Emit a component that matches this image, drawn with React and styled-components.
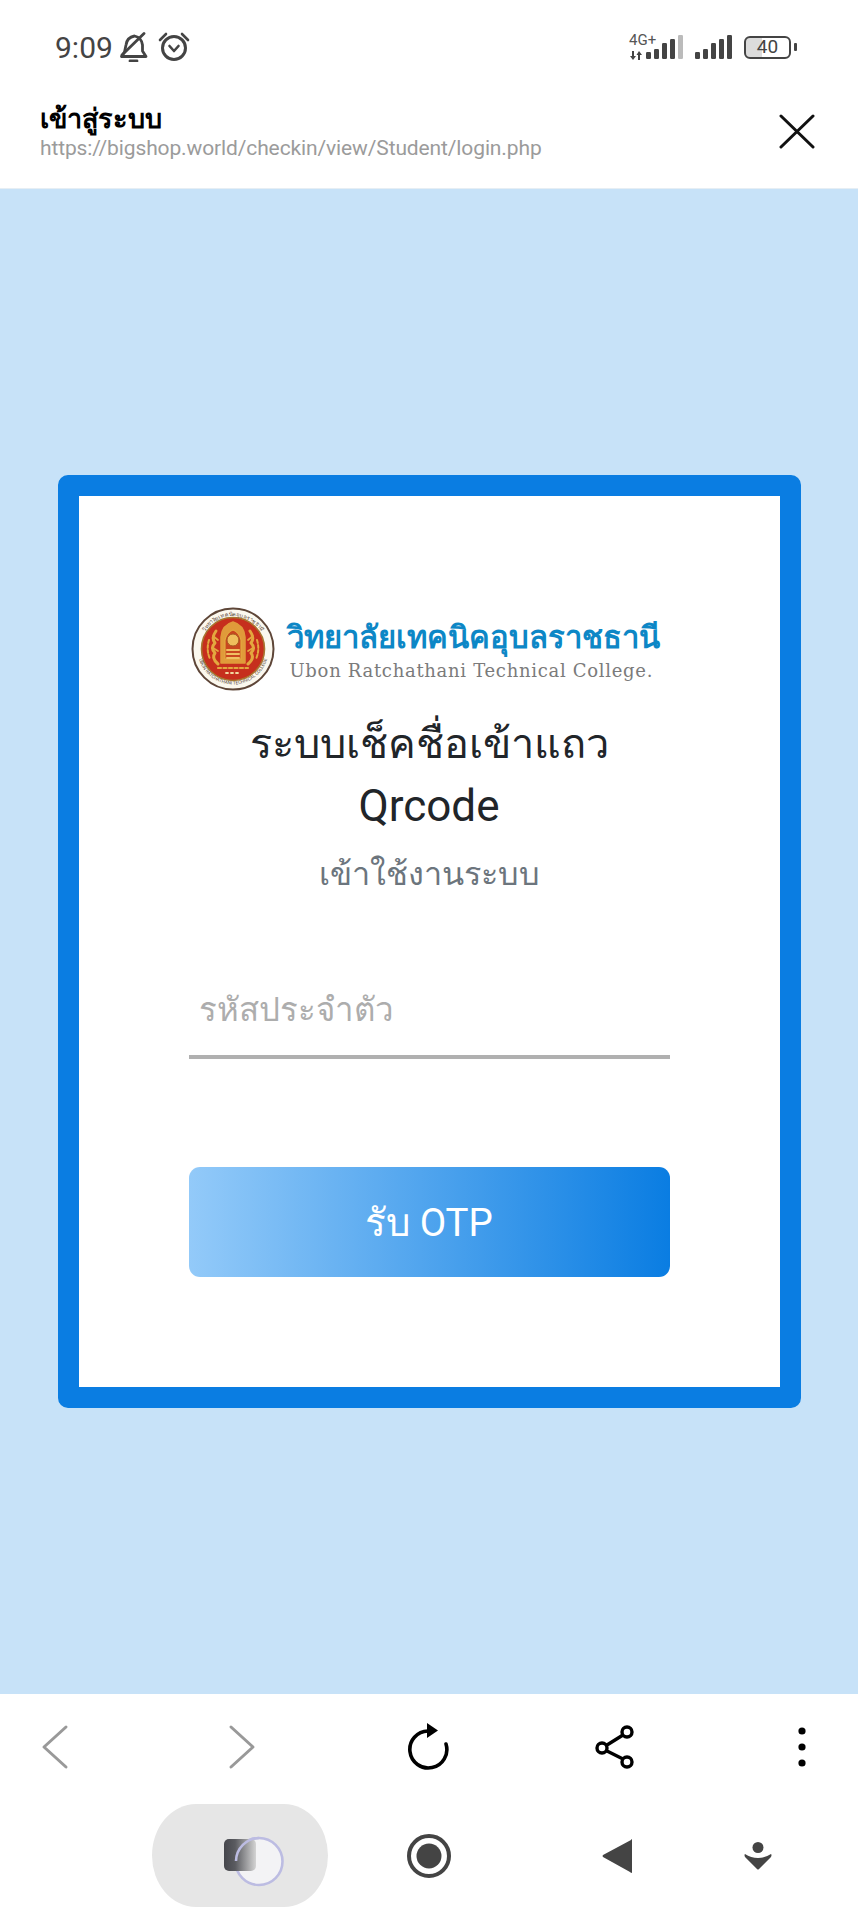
import React from "react";
import styled, { createGlobalStyle } from "styled-components";

const Global = createGlobalStyle`
  html, body { margin: 0; padding: 0; background: #fff; }
  body { font-family: Roboto, "Noto Sans", "Liberation Sans", sans-serif; }
  * { box-sizing: border-box; }
`;

const Page = styled.div`
  width: 858px;
  height: 1907px;
  display: flex;
  flex-direction: column;
  overflow: hidden;
  background: #fff;
`;

const StatusBar = styled.div`
  height: 94px;
  flex: none;
  padding: 0 61px 0 55px;
  display: flex;
  align-items: center;
  justify-content: space-between;
  color: #444;
`;

const StatusGroup = styled.div`
  display: flex;
  align-items: center;
  gap: ${(p) => p.$gap ?? 8}px;
`;

const Time = styled.span`
  font-size: 30px;
  font-weight: 400;
  width: 57px;
  white-space: nowrap;
`;

const NetColumn = styled.div`
  width: 17px;
  height: 25px;
  display: flex;
  flex-direction: column;
  justify-content: space-between;
`;

const NetLabel = styled.span`
  font-size: 15px;
  line-height: 10px;
  color: #555;
  white-space: nowrap;
`;

const Battery = styled.div`
  width: 47px;
  height: 23px;
  border: 2.5px solid #444;
  border-radius: 6px;
  background: linear-gradient(90deg, #dcdcdc 38%, transparent 38%);
  font-size: 19px;
  line-height: 18px;
  text-align: center;
  color: #444;
`;

const BatteryNub = styled.div`
  width: 3px;
  height: 8px;
  margin-left: 3px;
  background: #444;
  border-radius: 1px;
`;

const TitleBar = styled.header`
  height: 95px;
  flex: none;
  padding: 0 43px 0 40px;
  display: flex;
  align-items: flex-start;
  justify-content: space-between;
  border-bottom: 1px solid #e6eef4;
`;

const TitleBlock = styled.div`
  display: flex;
  flex-direction: column;
  padding-top: 10px;
`;

const PageTitle = styled.div`
  font-size: 27px;
  line-height: 30px;
  font-weight: 700;
  color: #000;
`;

const PageUrl = styled.div`
  font-size: 21px;
  line-height: 24px;
  letter-spacing: -0.12px;
  color: #9b9b9b;
  margin-top: 2px;
`;

const CloseIcon = styled.svg`
  width: 36px;
  height: 36px;
  margin-top: 20px;
`;

const Main = styled.main`
  flex: 1;
  background: #c7e2f8;
  display: flex;
  align-items: center;
  justify-content: center;
`;

const Card = styled.section`
  width: 743px;
  height: 933px;
  border: 21px solid #0a7de2;
  border-radius: 10px;
  background: #fff;
  padding-top: 111px;
  display: flex;
  flex-direction: column;
  align-items: center;
`;

const Logo = styled.div`
  display: flex;
  align-items: center;
  gap: 12px;
  width: 481px;
  padding-left: 2px;
`;

const LogoText = styled.div`
  display: flex;
  flex-direction: column;
`;

const LogoThai = styled.div`
  font-size: 31px;
  line-height: 44px;
  font-weight: 700;
  color: #0d87c6;
  white-space: nowrap;
`;

const LogoEnglish = styled.div`
  font-family: "DejaVu Serif", serif;
  font-size: 18px;
  line-height: 22px;
  letter-spacing: 0.7px;
  color: #7b7b7b;
  white-space: nowrap;
  padding-left: 3px;
`;

const Heading = styled.h1`
  margin: 21px 0 0;
  font-size: 41.5px;
  line-height: 63px;
  font-weight: 400;
  color: #212529;
  text-align: center;
`;

const HeadingLatin = styled.span`
  font-size: 44px;
`;

const SubHeading = styled.p`
  margin: 11px 0 0;
  font-size: 32.4px;
  line-height: 50px;
  color: #6c757d;
  text-align: center;
`;

const Field = styled.input`
  display: block;
  width: 481px;
  height: 96px;
  margin-top: 64px;
  padding: 0 10px;
  border: 0;
  border-bottom: 4px solid #b0b0b0;
  outline: 0;
  background: transparent;
  font: inherit;
  font-size: 33px;
  color: #333;
  &::placeholder { color: #adadad; opacity: 1; }
`;

const SubmitButton = styled.button`
  width: 481px;
  height: 110px;
  margin-top: 108px;
  border: 0;
  border-radius: 11px;
  background: linear-gradient(90deg, #93caf9 0%, #0a7de2 100%);
  color: #fff;
  font: inherit;
  font-size: 38.5px;
`;

const Bottom = styled.footer`
  height: 213px;
  flex: none;
  background: #fff;
  display: flex;
  flex-direction: column;
`;

const Toolbar = styled.div`
  height: 110px;
  flex: none;
  padding: 29px 31px 0;
  display: flex;
  justify-content: space-between;
  align-items: flex-start;
`;

const ToolIcon = styled.svg`
  width: 48px;
  height: 48px;
`;

const NavBar = styled.div`
  flex: 1;
  padding-left: 152px;
  display: grid;
  grid-template-columns: 176px 202px 174px 108px;
  align-items: center;
  justify-items: center;
`;

const RecentsPill = styled.div`
  width: 176px;
  height: 103px;
  background: #e6e6e6;
  border-radius: 44px / 51.5px;
  display: flex;
  align-items: center;
  justify-content: center;
`;

const Seal = ({ size = 84 }) => (
  <svg width={size} height={size} viewBox="0 0 84 84" style={{ flex: "none" }}>
    <defs>
      <path id="sealTop" d="M9 42 A33 33 0 0 1 75 42" />
      <path id="sealBottom" d="M6.5 42 A35.5 35.5 0 0 0 77.5 42" />
    </defs>
    <circle cx="42" cy="42" r="40.5" fill="#fbf8ee" stroke="#5e4638" strokeWidth="2" />
    <circle cx="42" cy="42" r="31.5" fill="#c62f1d" stroke="#a7762f" strokeWidth="1.6" />
    <text fontSize="5.6" fill="#5b4a40" fontFamily="Roboto, sans-serif">
      <textPath href="#sealTop" startOffset="50%" textAnchor="middle">วิทยาลัยเทคนิคอุบลราชธานี</textPath>
    </text>
    <text fontSize="4.6" fill="#4d3d35" fontFamily="Roboto, sans-serif">
      <textPath href="#sealBottom" startOffset="50%" textAnchor="middle">UBON RATCHATHANI TECHNICAL COLLEGE</textPath>
    </text>
    <g fill="none" stroke="#e3a83f" strokeLinecap="round" strokeLinejoin="round" style={{ filter: "blur(0.45px)" }}>
      <path d="M30 56 V30 Q31 18 42 15 Q53 18 54 30 V56 Z" fill="#e3a83f" strokeWidth="1.5" opacity="0.9" />
      <path d="M34 52 V33 Q36 25 42 23 Q48 25 50 33 V52 Z" fill="#c9471f" strokeWidth="1.2" />
      <circle cx="42" cy="33" r="6" fill="#efbf5d" stroke="#a85a20" strokeWidth="1" />
      <path d="M36 43 H48 M36 47 H48 M36 51 H48" stroke="#f0c062" strokeWidth="2" />
      <path d="M25 24 Q20 31 24 36 Q19 41 24 46 Q20 51 27 57" strokeWidth="3" />
      <path d="M59 24 Q64 31 60 36 Q65 41 60 46 Q64 51 57 57" strokeWidth="3" />
      <path d="M18 33 Q15 43 19 52 M66 33 Q69 43 65 52" strokeWidth="2" strokeDasharray="3 2" />
      <path d="M22 29 L27 33 M22 41 L27 44 M62 29 L57 33 M62 41 L57 44" strokeWidth="1.8" />
      <path d="M27 61 H57" strokeWidth="2.2" strokeDasharray="3 2.5" />
      <path d="M35 66 H49" stroke="#f1d9a0" strokeWidth="1.8" strokeDasharray="2 3" />
    </g>
  </svg>
);

const BellOff = () => (
  <svg width="30" height="30" viewBox="0 0 30 30" fill="none" stroke="#444" strokeWidth="2.8" strokeLinecap="round" strokeLinejoin="round">
    <path d="M2.5 24.5 H27 L23.5 19 V13 C23 8 20 5 15.5 4 C10 5 7.5 9 7 13 L5.5 20 Z" />
    <path d="M11 29 H18" />
    <path d="M3 23 L25 1.5" />
  </svg>
);

const Alarm = () => (
  <svg width="32" height="30" viewBox="0 0 32 30" fill="none" stroke="#444" strokeLinecap="round" strokeLinejoin="round">
    <circle cx="16" cy="16" r="11.5" strokeWidth="3" />
    <path d="M11.5 14 L16 19 L20.5 14" strokeWidth="2.6" />
    <path d="M2 8 L8 2 M30 8 L24 2" strokeWidth="2.6" />
  </svg>
);

const Signal = ({ lastColor = "#444" }) => {
  const tops = [17, 14, 8, 4, 0];
  return (
    <svg width="38" height="24" viewBox="0 0 38 24" fill="#444">
      {tops.map((t, i) => (
        <rect key={i} x={i * 8} y={t} width="5" height={24 - t} rx="1.2" fill={i === 4 ? lastColor : "#444"} />
      ))}
    </svg>
  );
};

const DataArrows = () => (
  <svg width="14" height="9" viewBox="0 0 14 9" fill="#444">
    <path d="M3 0 H5 V5 H7 L4 9 L1 5 H3 Z" />
    <path d="M9 9 H11 V4 H13 L10 0 L7.5 4 H9 Z" />
  </svg>
);

export default function App() {
  return (
    <Page>
      <Global />
      <StatusBar>
        <StatusGroup $gap={7}>
          <Time>9:09</Time>
          <StatusGroup $gap={9}>
            <BellOff />
            <Alarm />
          </StatusGroup>
        </StatusGroup>
        <StatusGroup $gap={11}>
          <StatusGroup $gap={0}>
            <NetColumn>
              <NetLabel>4G+</NetLabel>
              <DataArrows />
            </NetColumn>
            <Signal lastColor="#bbbbbb" />
          </StatusGroup>
          <Signal />
          <StatusGroup $gap={0}>
            <Battery>40</Battery>
            <BatteryNub />
          </StatusGroup>
        </StatusGroup>
      </StatusBar>

      <TitleBar>
        <TitleBlock>
          <PageTitle>เข้าสู่ระบบ</PageTitle>
          <PageUrl>https://bigshop.world/checkin/view/Student/login.php</PageUrl>
        </TitleBlock>
        <CloseIcon viewBox="0 0 36 36" fill="none" stroke="#111" strokeWidth="3" strokeLinecap="round">
          <path d="M2 2 L34 33 M34 2 L2 33" />
        </CloseIcon>
      </TitleBar>

      <Main>
        <Card>
          <Logo>
            <Seal />
            <LogoText>
              <LogoThai>วิทยาลัยเทคนิคอุบลราชธานี</LogoThai>
              <LogoEnglish>Ubon Ratchathani Technical College.</LogoEnglish>
            </LogoText>
          </Logo>
          <Heading>
            ระบบเช็คชื่อเข้าแถว
            <br />
            <HeadingLatin>Qrcode</HeadingLatin>
          </Heading>
          <SubHeading>เข้าใช้งานระบบ</SubHeading>
          <Field placeholder="รหัสประจำตัว" />
          <SubmitButton>รับ OTP</SubmitButton>
        </Card>
      </Main>

      <Bottom>
        <Toolbar>
          <ToolIcon viewBox="0 0 48 48" fill="none" stroke="#999" strokeWidth="3" strokeLinecap="round" strokeLinejoin="round">
            <path d="M35 4 L13 24 L35 44" />
          </ToolIcon>
          <ToolIcon viewBox="0 0 48 48" fill="none" stroke="#999" strokeWidth="3" strokeLinecap="round" strokeLinejoin="round">
            <path d="M13 4 L35 24 L13 44" />
          </ToolIcon>
          <ToolIcon viewBox="0 0 48 48" fill="none">
            <path d="M23 8 A18.5 18.5 0 1 0 41 21" stroke="#000" strokeWidth="3.6" strokeLinecap="round" />
            <path d="M22 0 L33 7.5 L22 15 Z" fill="#000" />
          </ToolIcon>
          <ToolIcon viewBox="0 0 48 48" fill="none" stroke="#000" strokeWidth="3.4">
            <path d="M31 12 L15 22 M15 28 L31 36" />
            <circle cx="35" cy="9" r="5" />
            <circle cx="10" cy="25" r="5" />
            <circle cx="35" cy="39" r="5" />
          </ToolIcon>
          <ToolIcon viewBox="0 0 48 48" fill="#000">
            <circle cx="23" cy="8" r="3.6" />
            <circle cx="23" cy="24" r="3.6" />
            <circle cx="23" cy="40" r="3.6" />
          </ToolIcon>
        </Toolbar>
        <NavBar>
          <RecentsPill>
            <svg width="90" height="62" viewBox="0 0 90 62">
              <defs>
                <linearGradient id="recentsFade" x1="0" x2="1" y1="0" y2="0">
                  <stop offset="0" stopColor="#45464c" />
                  <stop offset="0.35" stopColor="#5a5b60" />
                  <stop offset="1" stopColor="#d4d4d4" />
                </linearGradient>
              </defs>
              <circle cx="64" cy="36.5" r="23.5" fill="#f3f3f5" stroke="#bcbce2" strokeWidth="2.6" />
              <rect x="29" y="14" width="32" height="32" rx="5" fill="url(#recentsFade)" />
              <path d="M64 13 A23.5 23.5 0 0 0 41 36" fill="none" stroke="#bcbce2" strokeWidth="2.6" />
            </svg>
          </RecentsPill>
          <svg width="44" height="44" viewBox="0 0 44 44">
            <circle cx="22" cy="22" r="20" fill="none" stroke="#444" strokeWidth="4" />
            <circle cx="22" cy="22" r="12.5" fill="#444" />
          </svg>
          <svg width="32" height="38" viewBox="0 0 32 38">
            <path d="M30 3 Q31 1 31 3 V35 Q31 37 29 35 L2 20 Q1 19 2 18 Z" fill="#444" />
          </svg>
          <svg width="30" height="28" viewBox="0 0 30 28" fill="#444">
            <circle cx="15" cy="5.5" r="5.5" />
            <path d="M2 12 Q8 16 15 16 Q22 16 28 12 Q29 13 28 15 L16 27 Q15 28 14 27 L2 15 Q1 13 2 12 Z" />
          </svg>
        </NavBar>
      </Bottom>
    </Page>
  );
}
